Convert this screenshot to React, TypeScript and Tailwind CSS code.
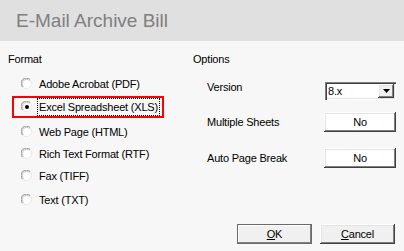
import React, { useState } from "react";

const formats = [
  { label: "Adobe Acrobat (PDF)", mt: "mt-[7px]" },
  { label: "Excel Spreadsheet (XLS)", mt: "mt-[1px]" },
  { label: "Web Page (HTML)", mt: "mt-[3px]" },
  { label: "Rich Text Format (RTF)", mt: "mt-0" },
  { label: "Fax (TIFF)", mt: "mt-0" },
  { label: "Text (TXT)", mt: "mt-[2px]" },
];

const Radio = ({ checked }: { checked: boolean }) => (
  <svg width="12" height="12" viewBox="0 0 12 12" className="shrink-0">
    <circle cx="6" cy="6" r="5.5" fill="#ffffff" />
    <path d="M1.6 9.2 A5 5 0 0 1 9.2 1.6" fill="none" stroke="#8a8a8a" strokeWidth="1" />
    <path d="M2.6 8.6 A4 4 0 0 1 8.6 2.6" fill="none" stroke="#c4c4c4" strokeWidth="1" />
    <path d="M9.8 2.4 A5.3 5.3 0 0 1 2.4 9.8" fill="none" stroke="#e6e6e6" strokeWidth="1" />
    {checked && <circle cx="6" cy="6" r="2" fill="#000000" />}
  </svg>
);

const bevel =
  "shadow-[inset_-1px_-1px_#404040,inset_1px_1px_#ffffff,inset_-2px_-2px_#808080,inset_2px_2px_#e3e3e3]";

export default function App() {
  const [selected, setSelected] = useState(1);

  return (
    <div className="w-[404px] h-[251px] flex flex-col bg-[#f7f7f7] text-[11px] leading-[14px] tracking-[-0.2px] text-black font-['Liberation_Sans',Arial,sans-serif] overflow-hidden whitespace-nowrap">
      {/* HEADER */}
      <div className="h-[41px] shrink-0 bg-[#e0e0e0] flex items-center pl-[16px]">
        <span className="text-[19px] tracking-normal text-[#7f7f7f] leading-[41px]">E-Mail Archive Bill</span>
      </div>

      <div className="flex-1 flex flex-col">
        <div className="flex">
          {/* FORMAT */}
          <div className="w-[190px] pt-[11px]">
            <div className="pl-[8px] h-[14px]">Format</div>
            {formats.map((f, i) => (
              <div
                key={f.label}
                onClick={() => setSelected(i)}
                className={`${f.mt} ml-[12px] w-[152px] h-[22px] flex items-center ${
                  i === 1 ? "border-2 border-[#ff0000] pl-[7px]" : "pl-[9px]"
                }`}
              >
                <Radio checked={selected === i} />
                <span
                  className={`ml-[4px] px-[1px] ${
                    i === 1 ? "border border-dotted border-black leading-[16px]" : "border border-transparent"
                  }`}
                >
                  {f.label}
                </span>
              </div>
            ))}
          </div>

          {/* OPTIONS */}
          <div className="flex-1 pt-[11px] pl-[3px] pr-[8px]">
            <div className="h-[14px]">Options</div>
            <div className="mt-[16px] flex justify-between items-start pl-[14px]">
              <span className="-mt-[2px]">Version</span>
              <div className="w-[71px] h-[18px] bg-white flex items-center shadow-[inset_1px_1px_#808080,inset_2px_2px_#404040,inset_-1px_-1px_#ffffff,inset_-2px_-2px_#e3e3e3]">
                <span className="pl-[3px] flex-1">8.x</span>
                <div className={`w-[16px] h-[14px] mr-[2px] bg-[#f0f0f0] flex items-center justify-center ${bevel}`}>
                  <svg width="7" height="4" viewBox="0 0 7 4">
                    <path d="M0 0 H7 L3.5 4 Z" fill="#000" />
                  </svg>
                </div>
              </div>
            </div>
            <div className="mt-[12px] flex justify-between items-center pl-[14px]">
              <span>Multiple Sheets</span>
              <button className={`w-[72px] h-[20px] bg-white ${bevel}`}>No</button>
            </div>
            <div className="mt-[16px] flex justify-between items-center pl-[14px]">
              <span>Auto Page Break</span>
              <button className={`w-[72px] h-[20px] bg-white ${bevel}`}>No</button>
            </div>
          </div>
        </div>

        {/* BUTTONS */}
        <div className="mt-auto mb-[7px] flex justify-end gap-[8px] pr-[9px]">
          <button className="w-[75px] h-[20px] bg-[#f0f0f0] border border-[#6a6a6a] shadow-[inset_-1px_-1px_#808080,inset_1px_1px_#ffffff]">
            <span className="underline">O</span>K
          </button>
          <button className={`w-[75px] h-[20px] bg-[#f0f0f0] ${bevel}`}>
            <span className="underline">C</span>ancel
          </button>
        </div>
      </div>
    </div>
  );
}
